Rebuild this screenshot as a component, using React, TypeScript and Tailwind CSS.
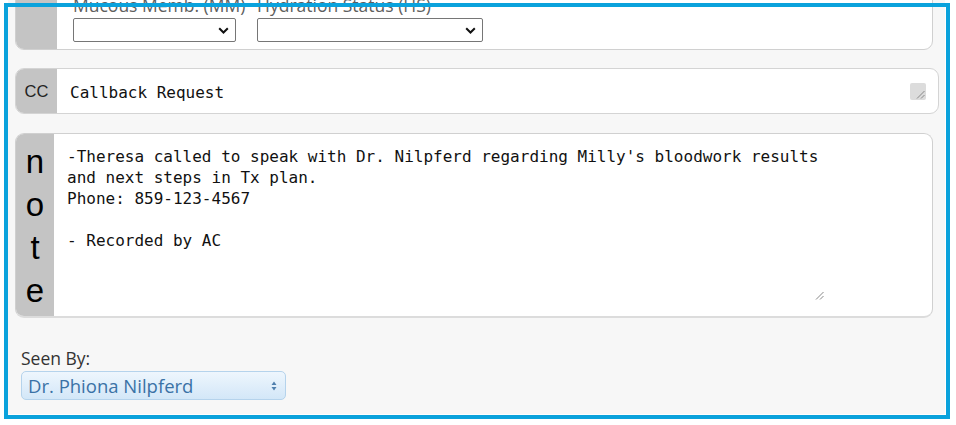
const MONO = { fontFamily: '"DejaVu Sans Mono", monospace' };

function Chevron() {
  return (
    <svg width="11" height="7" viewBox="0 0 11 7" className="shrink-0">
      <path d="M1.2 1.2l4.3 4.3 4.3-4.3" fill="none" stroke="#111" strokeWidth="2" />
    </svg>
  );
}

function Grip() {
  return (
    <svg width="9" height="9" viewBox="0 0 9 9">
      <path d="M8.5 1L1 8.5M8.5 5L5 8.5" stroke="#888" strokeWidth="1" />
    </svg>
  );
}

const NOTE = `-Theresa called to speak with Dr. Nilpferd regarding Milly's bloodwork results
and next steps in Tx plan.
Phone: 859-123-4567

- Recorded by AC`;

export default function App() {
  return (
    <div className="relative w-[956px] h-[425px] overflow-hidden bg-white">
      <div className="ml-[8px] w-[937px] h-[414px] bg-[#f7f7f7] pl-[7px] flex flex-col">
        {/* vitals row, scrolled partly out of view */}
        <div className="mt-[-12px] h-[62px] w-[918px] shrink-0 flex rounded-b-[9px] border border-[#d0d0d0] overflow-hidden bg-white">
          <div className="w-[41px] bg-[#c4c4c4]" />
          <div
            className="flex gap-[21px] pl-[16px] pt-[6px] text-[17.5px] leading-[20px] text-[#5f5f5f]"
            style={{ fontFamily: '"Open Sans", sans-serif' }}
          >
            <div className="w-[163px] flex flex-col">
              <span className="whitespace-nowrap">Mucous Memb. (MM)</span>
              <div className="mt-[3px] h-[24px] flex items-center justify-end pr-[6px] border border-[#767676] rounded-[2px] bg-white">
                <Chevron />
              </div>
            </div>
            <div className="w-[226px] flex flex-col">
              <span className="whitespace-nowrap">Hydration Status (HS)</span>
              <div className="mt-[3px] h-[24px] flex items-center justify-end pr-[6px] border border-[#767676] rounded-[2px] bg-white">
                <Chevron />
              </div>
            </div>
          </div>
        </div>

        {/* chief complaint */}
        <div className="mt-[18px] h-[46px] w-[924px] shrink-0 flex rounded-[9px] border border-[#d4d4d4] overflow-hidden bg-white">
          <div
            className="w-[41px] bg-[#c4c4c4] flex items-center justify-center pt-[1px] text-[16.5px] text-[#222]"
            style={{ fontFamily: '"Liberation Sans", Arial, sans-serif' }}
          >
            CC
          </div>
          <div className="flex-1 flex items-center pl-[13px] pr-[12px]">
            <span className="flex-1 pt-[3px] text-[16px] text-[#111]" style={MONO}>
              Callback Request
            </span>
            <div className="w-[16px] h-[17px] rounded-[2px] bg-[#dcdcdc] flex items-end justify-end p-[1px]">
              <Grip />
            </div>
          </div>
        </div>

        {/* note */}
        <div className="mt-[19px] h-[185px] w-[918px] shrink-0 flex rounded-[9px] border border-[#d0d0d0] border-b-2 border-b-[#dcdcdc] overflow-hidden bg-white">
          <div
            className="w-[38px] bg-[#c4c4c4] flex flex-col items-center pt-[6px] text-[33px] leading-[43px] text-black"
            style={{ fontFamily: '"Liberation Sans", Arial, sans-serif' }}
          >
            <span>n</span>
            <span>o</span>
            <span>t</span>
            <span>e</span>
          </div>
          <div className="relative w-[772px] pl-[13px] pt-[12px]">
            <div className="whitespace-pre text-[16px] leading-[21px] text-[#111]" style={MONO}>
              {NOTE}
            </div>
            <div className="absolute right-[2px] bottom-[16px]">
              <Grip />
            </div>
          </div>
        </div>

        {/* seen by */}
        <div
          className="mt-[30px] pl-[6px] flex flex-col"
          style={{ fontFamily: '"Open Sans", sans-serif' }}
        >
          <span className="text-[17.5px] leading-[21px] text-[#333]">Seen By:</span>
          <div className="mt-[2px] h-[29px] w-[265px] flex items-center justify-between pl-[6px] pr-[8px] rounded-[5px] border border-[#b5d3ec] bg-gradient-to-b from-[#eef6fd] to-[#d3e7f8]">
            <span className="text-[18.5px] leading-[24px] text-[#3a72a6]">Dr. Phiona Nilpferd</span>
            <svg width="6" height="10" viewBox="0 0 6 10">
              <path d="M3 0.5L5.5 4H0.5z M3 9.5L5.5 6H0.5z" fill="#4f7fae" />
            </svg>
          </div>
        </div>
      </div>

      {/* annotation frame drawn over the screenshot */}
      <div className="pointer-events-none absolute left-[4px] top-[3px] w-[946px] h-[416px] border-4 border-[#0aa2dc]" />
    </div>
  );
}
